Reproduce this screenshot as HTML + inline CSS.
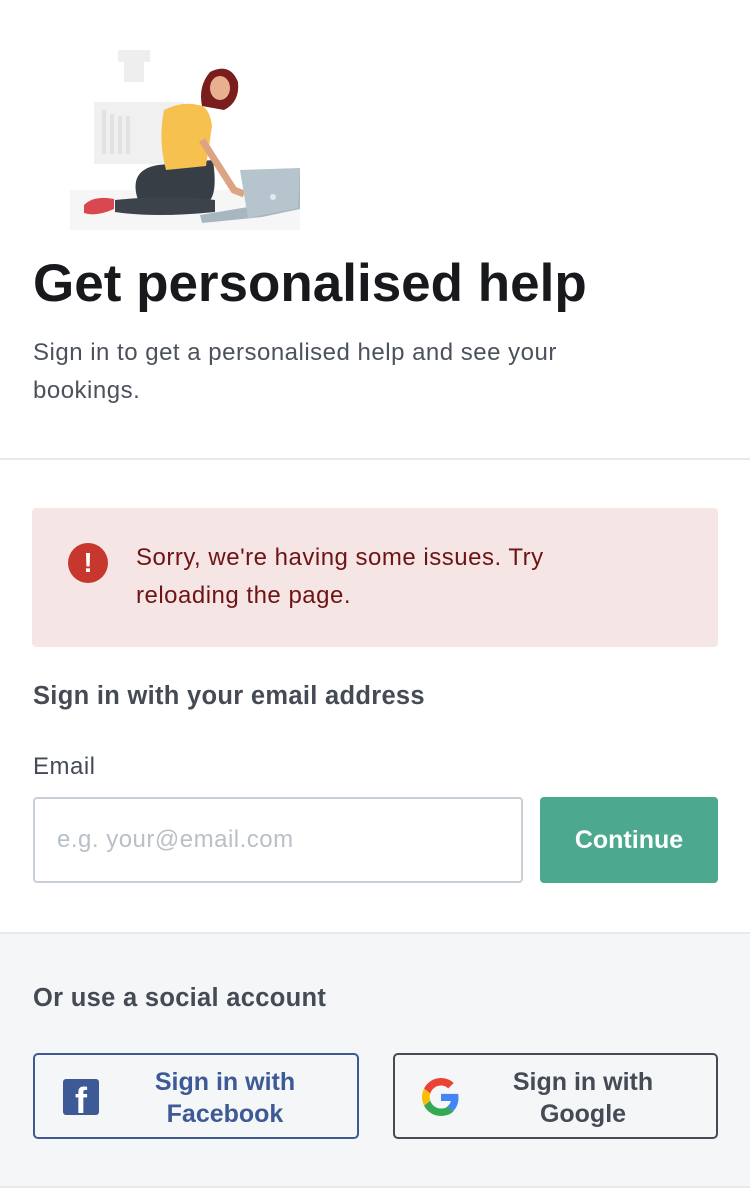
<!DOCTYPE html>
<html><head><meta charset="utf-8"><style>
*{box-sizing:border-box;margin:0;padding:0}
body{width:750px;height:1190px;background:#fff;font-family:"Liberation Sans",Arial,sans-serif;position:relative;overflow:hidden;color:#1b1e22}
.a{position:absolute}
</style></head><body>
<svg class="a" style="left:60px;top:30px" width="260" height="210" viewBox="0 0 260 210">
<rect x="10" y="160" width="230" height="40" fill="#f6f6f6"/>
<rect x="34" y="72" width="90" height="62" fill="#f0f0f0"/>
<rect x="42" y="80" width="4" height="44" fill="#e2e2e2"/><rect x="50" y="84" width="4" height="40" fill="#e2e2e2"/><rect x="58" y="86" width="4" height="38" fill="#e2e2e2"/><rect x="66" y="86" width="4" height="38" fill="#e2e2e2"/>
<path d="M58 20h32v12h-6v20h-20v-20h-6z" fill="#eee"/>
<path d="M78 170 q-10 -30 20 -35 l55 -5 q5 35 -5 42 z" fill="#383e45"/>
<path d="M55 170 q60 -6 100 0 l0 12 q-60 6 -100 0z" fill="#3d434b"/>
<path d="M104 80 q20 -10 38 -4 q8 4 10 20 l-6 40 l-40 4 q-8 -30 -2 -60z" fill="#f6c14f"/>
<path d="M142 76 q-4 -20 8 -34 q20 -10 28 10 q2 20 -14 28 z" fill="#7a1d1d"/>
<ellipse cx="160" cy="58" rx="10" ry="12" fill="#e9b08f"/>
<path d="M142 110 l32 50 l10 4" stroke="#dca482" stroke-width="7" fill="none"/>
<path d="M24 175 q10 -10 30 -6 l0 10 q-18 8 -30 4z" fill="#d9484f"/>
<path d="M140 185 l60 -10 l40 -36 l0 40 l-38 8 l-60 6z" fill="#a8b6c0"/>
<path d="M180 140 l60 -2 l-2 40 l-50 10z" fill="#b6c4cd"/>
<circle cx="213" cy="167" r="3" fill="#e3e9ed"/>
</svg>
<div class="a" style="left:33px;top:253px;font-size:53px;font-weight:bold;color:#17191c">Get personalised help</div>
<div class="a" style="left:33px;top:334px;width:620px;font-size:24px;line-height:38px;color:#4b525b;letter-spacing:0.5px">Sign in to get a personalised help and see your bookings.</div>
<div class="a" style="left:0;top:458px;width:750px;height:2px;background:#e8e9eb"></div>
<div class="a" style="left:32px;top:508px;width:686px;height:139px;background:#f5e6e5;border-radius:4px"></div>
<div class="a" style="left:68px;top:543px;width:40px;height:40px;border-radius:50%;background:#c8372d;color:#fff;font-weight:bold;font-size:28px;text-align:center;line-height:40px">!</div>
<div class="a" style="left:136px;top:539px;width:490px;font-size:24px;line-height:38px;color:#6e1414;letter-spacing:0.5px">Sorry, we're having some issues. Try reloading the page.</div>
<div class="a" style="left:33px;top:682px;font-size:25.5px;font-weight:bold;color:#454b55;letter-spacing:0.3px">Sign in with your email address</div>
<div class="a" style="left:33px;top:753px;font-size:24px;color:#454b55;letter-spacing:0.5px">Email</div>
<div class="a" style="left:33px;top:797px;width:490px;height:86px;border:2px solid #c8cfd6;border-radius:4px;padding-left:22px;line-height:82px;font-size:24px;color:#b8c0c8;letter-spacing:0.5px">e.g. your@email.com</div>
<div class="a" style="left:540px;top:797px;width:178px;height:86px;background:#4ca990;border-radius:4px;color:#fff;font-weight:bold;font-size:25px;text-align:center;line-height:86px">Continue</div>
<div class="a" style="left:0;top:932px;width:750px;height:256px;background:#f5f6f8;border-top:2px solid #e6e8eb;border-bottom:2px solid #e6e8eb"></div>
<div class="a" style="left:33px;top:984px;font-size:25.5px;font-weight:bold;color:#454b55;letter-spacing:0.3px">Or use a social account</div>
<div class="a" style="left:33px;top:1053px;width:326px;height:86px;border:2px solid #3d5a96;border-radius:5px;color:#3d5a96;font-weight:bold;font-size:25px;line-height:32px;padding-top:11px">
<div style="position:absolute;left:28px;top:24px;width:36px;height:36px;background:#3d5a96;border-radius:3px;overflow:hidden"><span style="position:absolute;left:12px;top:2px;color:#fff;font-size:36px;line-height:40px;font-weight:bold">f</span></div>
<div style="margin-left:90px;width:200px;text-align:center">Sign in with<br>Facebook</div></div>
<div class="a" style="left:393px;top:1053px;width:325px;height:86px;border:2px solid #454b55;border-radius:5px;color:#454b55;font-weight:bold;font-size:25px;line-height:32px;padding-top:11px">
<svg style="position:absolute;left:27px;top:23px" width="38" height="38" viewBox="0 0 48 48"><path fill="#EA4335" d="M24 9.5c3.5 0 6.7 1.2 9.2 3.6l6.8-6.8C35.9 2.4 30.5 0 24 0 14.6 0 6.6 5.4 2.6 13.3l7.9 6.2C12.4 13.7 17.7 9.5 24 9.5z"/><path fill="#4285F4" d="M46.1 24.5c0-1.6-.1-3.1-.4-4.5H24v9h12.4c-.5 2.9-2.2 5.3-4.7 7l7.6 5.9c4.4-4.1 6.8-10.1 6.8-17.4z"/><path fill="#FBBC05" d="M10.5 28.6c-.5-1.4-.8-3-.8-4.6s.3-3.2.8-4.6l-7.9-6.2C.9 16.5 0 20.1 0 24s.9 7.5 2.6 10.8l7.9-6.2z"/><path fill="#34A853" d="M24 48c6.5 0 11.9-2.1 15.9-5.8l-7.6-5.9c-2.2 1.5-5 2.3-8.3 2.3-6.3 0-11.6-4.2-13.5-9.9l-7.9 6.2C6.6 42.6 14.6 48 24 48z"/></svg>
<div style="margin-left:88px;width:200px;text-align:center">Sign in with<br>Google</div></div>
</body></html>
